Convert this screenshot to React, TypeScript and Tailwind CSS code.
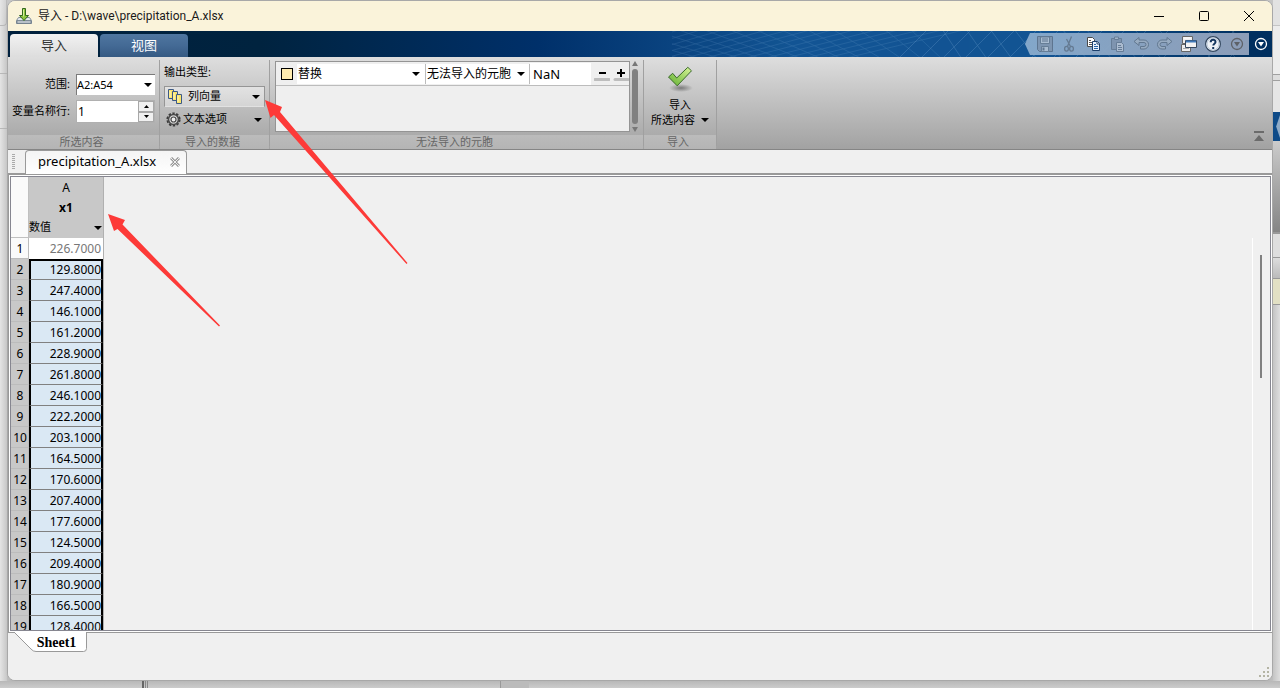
import type { ReactNode } from 'react';

const VALUES = [
  '226.7000', '129.8000', '247.4000', '146.1000', '161.2000', '228.9000', '261.8000',
  '246.1000', '222.2000', '203.1000', '164.5000', '170.6000', '207.4000', '177.6000',
  '124.5000', '209.4000', '180.9000', '166.5000', '128.4000',
];

function Caret({ className = '' }: { className?: string }) {
  return (
    <svg className={`pointer-events-none shrink-0 ${className}`} width="8" height="4" viewBox="0 0 8 4">
      <path d="M0 0h8L4 4z" fill="currentColor" />
    </svg>
  );
}

function Separator() {
  return <div className="w-px my-[3px] bg-[#a0a0a0]" />;
}

// Ribbon section with its caption strip
function Group({ label, className = '', children }: { label: string; className?: string; children: ReactNode }) {
  return (
    <section className={`flex flex-col shrink-0 ${className}`}>
      <div className="flex-1 min-h-0">{children}</div>
      <div className="h-[14px] pr-1 leading-[13px] text-center text-[#666] bg-white/20">{label}</div>
    </section>
  );
}

function ImportIcon() {
  return (
    <svg width="16" height="16" viewBox="0 0 16 16">
      <path d="M2.5 9.5L.5 12.5v3h15v-3l-2-3z" fill="#e4e8ec" stroke="#7e8c99" />
      <path d="M1 12.5h14v3H1z" fill="#b9c1c9" stroke="#6c7a86" strokeWidth=".8" />
      <path d="M6.500.5h3v7h3L8 12.5 3.500 7.500h3z" fill="#8cc63f" stroke="#33691e" />
      <path d="M7.500 1.500v7" stroke="#d4f09c" />
    </svg>
  );
}

function ColumnsIcon() {
  return (
    <svg width="15" height="15" viewBox="0 0 15 15" fill="#fbe46b" stroke="#3c5a86">
      <path d="M.5.500h5v9h-5z" />
      <path d="M4.500 2.500h5v9h-5z" />
      <path d="M8.500 5.500h5v9h-5z" />
      <path d="M2 2v6M6 4v6M10 7v6" stroke="#fff7c0" />
    </svg>
  );
}

function GearIcon() {
  return (
    <svg width="15" height="15" viewBox="0 0 15 15" fill="none">
      <circle cx="7.5" cy="7.5" r="6.200" stroke="#3d3d3d" strokeWidth="1.800" strokeDasharray="2.400 1.500" />
      <circle cx="7.5" cy="7.5" r="5" stroke="#4a4a4a" strokeWidth="1.600" fill="#d8d8d8" />
      <circle cx="7.5" cy="7.5" r="2.500" stroke="#4a4a4a" strokeWidth="1.200" fill="#eee" />
    </svg>
  );
}

function CheckIcon() {
  return (
    <svg width="26" height="26" viewBox="0 0 26 26">
      <defs>
        <linearGradient id="check" x1="0" y1="1" x2="1" y2="0">
          <stop offset="0" stopColor="#5fae2e" />
          <stop offset="1" stopColor="#d9f59a" />
        </linearGradient>
        <radialGradient id="shade">
          <stop offset="0" stopColor="#666" stopOpacity=".8" />
          <stop offset="1" stopColor="#666" stopOpacity="0" />
        </radialGradient>
      </defs>
      <ellipse cx="14" cy="22" rx="12" ry="4" fill="url(#shade)" />
      <path d="M1.500 11l4.200-3.700 4 4.700L20.800 1.300l3.700 3.500L10.200 19.800z" fill="url(#check)" stroke="#3a6a2a" strokeLinejoin="round" />
    </svg>
  );
}

const QUICK_ACTIONS: { name: string; icon: ReactNode }[] = [
  {
    name: '保存',
    icon: (
      <g opacity=".75">
        <path d="M.5.500h15v15h-13l-2-2z" fill="#7b8fa8" stroke="#51647c" />
        <path d="M3.500 1h9v6.500h-9z" fill="#b7c5d4" stroke="#5d7086" />
        <path d="M5 3h6M5 5h6" stroke="#51647c" />
        <path d="M4.500 10.500h7v5h-7z" fill="#b7c5d4" stroke="#5d7086" />
        <path d="M5.500 11.500h2v3h-2z" fill="#51647c" />
      </g>
    ),
  },
  {
    name: '剪切',
    icon: (
      <g fill="none" stroke="#647a92">
        <path d="M10.500.500L6.500 10.500M5.500 3l4 7.500" strokeWidth="1.300" />
        <ellipse cx="5.500" cy="12.800" rx="1.900" ry="2.400" strokeWidth="1.300" />
        <ellipse cx="10.500" cy="12.800" rx="1.900" ry="2.400" strokeWidth="1.300" />
      </g>
    ),
  },
  {
    name: '复制',
    icon: (
      <g>
        <path d="M2.500 1.500h5l2 2v7h-7z" fill="#fff" stroke="#4a4a4a" />
        <path d="M4 4.500h2M4 6.500h4M4 8.500h4" stroke="#555" />
        <path d="M7.500 5.500h5l2 2v7h-7z" fill="#e8f1fb" stroke="#1c3f6b" />
        <path d="M12 5.500v2.500h2.500" stroke="#1c3f6b" fill="#fff" />
        <path d="M9 8.500h2M9 10.500h4M9 12.500h4" stroke="#2763a5" />
      </g>
    ),
  },
  {
    name: '粘贴',
    icon: (
      <g opacity=".75" stroke="#5b7088">
        <path d="M2.500 2.500h10v11h-10z" fill="#7b8fa8" />
        <path d="M5.500 1h4v2.500h-4z" fill="#a9b9ca" />
        <path d="M7.500 6.500h5l2 2v7h-7z" fill="#b7c5d4" />
        <path d="M9 9.500h3M9 11.500h4M9 13.500h4" />
      </g>
    ),
  },
  {
    name: '撤消',
    icon: (
      <path d="M1 5.500L6 1.500v2.500h5a4.500 4.500 0 010 9H7.500v-2.500H11a2 2 0 000-4H6V9.500z" fill="#97abc1" stroke="#61778f" />
    ),
  },
  {
    name: '重做',
    icon: (
      <path d="M15 5.500L10 1.500v2.500H5a4.500 4.500 0 000 9h3.500v-2.500H5a2 2 0 010-4h5V9.500z" fill="#97abc1" stroke="#61778f" />
    ),
  },
  {
    name: '切换窗口',
    icon: (
      <g>
        <path d="M1.500.500h10v7h-10z" fill="#eee" stroke="#666" />
        <path d="M3 2h7" stroke="#fff" />
        <path d="M.500 8.500h9v7h-9z" fill="#eee" stroke="#666" />
        <path d="M2 12.500h6" stroke="#aaa" />
        <path d="M4.500 4.500h11v7h-11z" fill="#f3f3f3" stroke="#35485f" />
        <path d="M5 5.500h10" stroke="#3f78b8" strokeWidth="2" />
      </g>
    ),
  },
  {
    name: '帮助',
    icon: (
      <g>
        <circle cx="8" cy="8" r="7.400" fill="#eef2f7" stroke="#33475f" strokeWidth="1.200" />
        <circle cx="8" cy="8" r="6" fill="none" stroke="#b9c9da" />
        <path d="M5.700 6.200c0-3.200 4.800-3.200 4.800-.2 0 1.700-2.200 1.700-2.200 3.500M8.200 11v2" fill="none" stroke="#14365f" strokeWidth="2" />
      </g>
    ),
  },
  {
    name: '快速访问',
    icon: (
      <g>
        <circle cx="8" cy="8" r="5.500" fill="none" stroke="#5d6168" strokeWidth="1.300" />
        <path d="M5 6h6l-3 4.500z" fill="#5d6168" />
      </g>
    ),
  },
];

function BannerMesh() {
  return (
    <svg className="absolute right-0 top-0 h-full w-[600px]" viewBox="0 0 600 26" fill="none" stroke="#9cc4e8" strokeWidth=".7">
      {/* flat part of the net */}
      <g opacity=".18">
        {Array.from({ length: 14 }).map((_, i) => (
          <path key={i} d={`M${i * 26 - 100} -2L${i * 20 + 10} 28`} />
        ))}
        {Array.from({ length: 14 }).map((_, i) => (
          <path key={i} d={`M${i * 22 + 10} -2L${i * 20 - 90} 28`} />
        ))}
      </g>
      {/* steep part */}
      <g opacity=".28">
        {Array.from({ length: 14 }).map((_, i) => (
          <path key={i} d={`M${270 + i * 24} -2l${20 + i} 30`} />
        ))}
        {Array.from({ length: 16 }).map((_, i) => (
          <path key={i} d={`M${256 + i * 22} -2l-30 30`} />
        ))}
      </g>
    </svg>
  );
}

function TitleBar() {
  return (
    <header className="flex h-[30px] shrink-0 items-center bg-[#faf3da] pl-2">
      <ImportIcon />
      <h1 className="ml-[6px] flex-1 font-['Roboto','Noto_Sans_CJK_SC',sans-serif] text-xs text-[#1a1a1a]">导入 - D:\wave\precipitation_A.xlsx</h1>
      <button aria-label="最小化" className="flex h-full w-[45px] items-center justify-center">
        <svg width="10" height="10"><path d="M0 5.500h10" stroke="#000" /></svg>
      </button>
      <button aria-label="最大化" className="flex h-full w-[45px] items-center justify-center">
        <svg width="10" height="10"><rect x=".5" y=".5" width="9" height="9" rx="1" fill="none" stroke="#000" /></svg>
      </button>
      <button aria-label="关闭" className="flex h-full w-[46px] items-center justify-center">
        <svg width="10" height="10"><path d="M0 0l10 10M10 0L0 10" stroke="#000" /></svg>
      </button>
    </header>
  );
}

function TabBar() {
  return (
    <nav className="relative flex h-[26px] shrink-0 items-end gap-[2px] bg-[linear-gradient(90deg,#00203d_0%,#00233f_20%,#00306a_42%,#135594_62%,#135594_82%,#00305f_98%)] pl-[2px]">
      <BannerMesh />
      <button className="relative h-[23px] w-[88px] rounded-t-[4px] bg-linear-to-b from-[#f2f2f2] to-[#dddddd] text-[13px] text-[#333]">导入</button>
      <button className="relative h-[23px] w-[88px] rounded-t-[4px] bg-linear-to-b from-[#4f76a0] via-[#446a95] to-[#355a83] text-[13px] text-white">视图</button>
      <div className="relative ml-auto mb-[2px] flex h-[22px] bg-linear-to-r from-[#8fb0d0]/90 to-[#8c9db8] pl-2 [clip-path:polygon(5px_0,100%_0,100%_100%,5px_100%,0_50%)]">
        {QUICK_ACTIONS.map((action) => (
          <button key={action.name} aria-label={action.name} className="flex w-6 items-center justify-center">
            <svg width="16" height="16" viewBox="0 0 16 16">{action.icon}</svg>
          </button>
        ))}
      </div>
      <button aria-label="更多" className="relative -ml-[2px] flex h-full w-[23px] items-center justify-center bg-[#002f5f]">
        <svg width="16" height="16" viewBox="0 0 16 16">
          <circle cx="8" cy="8" r="5.500" fill="none" stroke="#fff" strokeWidth="1.300" />
          <path d="M5 6h6l-3 4.500z" fill="#fff" />
        </svg>
      </button>
    </nav>
  );
}

function Ribbon() {
  return (
    <div className="flex h-[93px] shrink-0 border-b border-[#858585] bg-linear-to-b from-[#dedede] to-[#a2a2a2] text-[11px]">
      <Group label="所选内容" className="w-[151px]">
        <div className="grid grid-cols-[62px_79px] items-center gap-x-[6px] gap-y-[5px] pt-[17px] text-right">
          <label htmlFor="range">范围:</label>
          <div className="relative flex h-[21px] items-center border-l border-t border-[#7a7a7a] bg-white">
            <select id="range" className="h-full w-full appearance-none outline-none">
              <option>A2:A54</option>
            </select>
            <Caret className="absolute right-[3px]" />
          </div>
          <label htmlFor="name-row" className="whitespace-nowrap">变量名称行:</label>
          <div className="flex h-[23px] border border-[#b0b0b0] bg-white">
            <input id="name-row" defaultValue="1" className="min-w-0 flex-1 px-px text-xs outline-none" />
            <div className="flex w-4 flex-col">
              <button aria-label="增加" className="flex flex-1 items-center justify-center border border-[#a8a8a8] bg-[#f0f0f0]">
                <svg width="5" height="3"><path d="M0 3h5L2.500 0z" /></svg>
              </button>
              <button aria-label="减少" className="flex flex-1 items-center justify-center border border-[#a8a8a8] bg-[#f0f0f0]">
                <svg width="5" height="3"><path d="M0 0h5L2.500 3z" /></svg>
              </button>
            </div>
          </div>
        </div>
      </Group>
      <Separator />
      <Group label="导入的数据" className="w-[109px]">
        <div className="flex flex-col pl-1 pt-[5px]">
          <label htmlFor="output-type" className="h-6 leading-5">输出类型:</label>
          <div className="relative flex h-[21px] w-[101px] items-center border border-b-transparent border-[#959595] bg-linear-to-b from-[#e2e2e2] to-[#d4d4d4] pl-[3px]">
            <ColumnsIcon />
            <select id="output-type" className="h-full flex-1 appearance-none pl-[5px] outline-none">
              <option>列向量</option>
            </select>
            <Caret className="absolute right-1" />
          </div>
          <button className="mt-[2px] flex h-[21px] w-[101px] items-center pl-[2px] pr-[3px]">
            <GearIcon />
            <span className="ml-[2px]">文本选项</span>
            <Caret className="ml-auto" />
          </button>
        </div>
      </Group>
      <Separator />
      <Group label="无法导入的元胞" className="w-[373px]">
        <div className="flex h-full pb-[3px] pl-[5px] pt-1 text-xs">
          <div className="w-[355px] border border-[#949494] bg-[#efefef]">
            <div className="flex h-6 items-center border-b border-[#bcbcbc]">
              <div className="ml-[5px] h-3 w-3 shrink-0 border border-black bg-[#ffecb0]" />
              <div className="relative ml-1 flex h-5 w-[128px] items-center bg-white">
                <select aria-label="规则" className="h-full w-full appearance-none pl-px outline-none">
                  <option>替换</option>
                </select>
                <Caret className="absolute right-[5px]" />
              </div>
              <div className="relative flex h-5 w-[105px] items-center border-x border-[#bcbcbc] bg-white">
                <select aria-label="条件" className="h-full w-full appearance-none pl-px outline-none">
                  <option>无法导入的元胞</option>
                </select>
                <Caret className="absolute right-1" />
              </div>
              <input aria-label="替换值" defaultValue="NaN" className="h-[22px] w-[61px] bg-white px-[3px] text-[13px] outline-none" />
              <button aria-label="删除规则" className="ml-1 flex h-5 w-[14px] flex-col items-center">
                <svg width="16" height="18" viewBox="0 0 16 18">
                  <path d="M5 9h7" stroke="#000" strokeWidth="2" />
                  <path d="M1 15.500h14" stroke="#bdbdbd" strokeWidth="3" strokeLinecap="round" />
                </svg>
              </button>
              <button aria-label="添加规则" className="ml-1 flex h-5 w-4 flex-col items-center">
                <svg width="16" height="18" viewBox="0 0 16 18">
                  <path d="M4 9h8M8 5v8" stroke="#000" strokeWidth="2" />
                  <path d="M2 15.500h13" stroke="#bdbdbd" strokeWidth="3" strokeLinecap="round" />
                </svg>
              </button>
            </div>
          </div>
          <div className="flex w-[10px] flex-col items-center gap-[3px] text-[#777]">
            <svg className="shrink-0" width="6" height="5"><path d="M0 5h6L3 0z" fill="currentColor" /></svg>
            <div className="w-[6px] flex-1 rounded-full bg-[#808080]" />
            <svg className="shrink-0" width="6" height="5"><path d="M0 0h6L3 5z" fill="currentColor" /></svg>
          </div>
        </div>
      </Group>
      <Separator />
      <Group label="导入" className="w-[72px]">
        <button className="flex w-full flex-col items-center pt-[9px] leading-[15px]">
          <CheckIcon />
          <span className="mt-[5px]">导入</span>
          <span className="flex items-center gap-[6px] whitespace-nowrap">
            所选内容
            <Caret />
          </span>
        </button>
      </Group>
      <Separator />
      <button aria-label="最小化工具条" className="ml-auto self-end p-2">
        <svg width="10" height="10" viewBox="0 0 10 10" fill="#6b6b6b">
          <path d="M0 0h10v2H0zM5 4l5 6H0z" />
        </svg>
      </button>
    </div>
  );
}

function DocumentTabs() {
  return (
    <div className="flex h-6 shrink-0 border-b border-[#999] bg-[#f0f0f0]">
      <div className="ml-1 mt-1 h-[15px] w-[3px] bg-[repeating-linear-gradient(#aaa_0_1px,transparent_1px_2px)]" />
      <div className="z-10 -mb-px ml-[10px] flex items-center rounded-t-[4px] border border-b-0 border-[#999] bg-linear-to-b from-[#f4f4f4] to-white pb-px pl-3 pr-[6px] text-[13px]">
        <span>precipitation_A.xlsx</span>
        <button aria-label="关闭标签" className="ml-[14px]">
          <svg width="10" height="10" viewBox="0 0 10 10">
            <path d="M1 1l8 8M9 1L1 9" stroke="#999" strokeWidth="3" />
            <path d="M1 1l8 8M9 1L1 9" stroke="#eee" />
          </svg>
        </button>
      </div>
    </div>
  );
}

function DataGrid() {
  return (
    <div className="flex min-h-0 flex-1 border border-r-0 border-[#999] bg-white p-px">
      <div className="flex flex-1 overflow-hidden border border-[#868690] bg-[#f0f0f0]">
        <div className="w-[93px] border-r border-[#b0b0b0]">
          <table className="w-full table-fixed border-separate border-spacing-0">
            <thead>
              <tr>
                <th className="h-[61px] w-[18px] border-b border-r border-[#c0c0c0] bg-[#fafafa]" />
                <th className="bg-[#c8c8c8] p-0 align-top font-normal">
                  <div className="h-5 leading-[22px]">A</div>
                  <div className="h-5 font-bold leading-[22px]">x1</div>
                  <div className="relative flex h-[21px] items-center">
                    <select aria-label="变量类型" className="h-full w-full appearance-none text-[11px] outline-none">
                      <option>数值</option>
                    </select>
                    <Caret className="absolute right-px" />
                  </div>
                </th>
              </tr>
            </thead>
            <tbody>
              {VALUES.map((value, i) => (
                <tr key={i} className="h-[21px] leading-5">
                  <th
                    scope="row"
                    className={`border-b border-r border-[#bcbcbc] p-0 pl-px pt-px text-center font-normal leading-[19px] ${i === 0 ? 'bg-[#fafafa]' : 'bg-[#c8c8c8]'}`}
                  >
                    {i + 1}
                  </th>
                  {i === 0 ? (
                    <td className="bg-white p-0 pr-[2px] pt-px text-right text-[#777]">{value}</td>
                  ) : (
                    <td
                      className={`border-b border-l-2 border-r-2 border-b-[#808080] border-x-black bg-[#dae8f4] p-0 text-right ${i === 1 ? 'border-t-2 border-t-black leading-[18px]' : 'pt-px leading-[19px]'}`}
                    >
                      {value}
                    </td>
                  )}
                </tr>
              ))}
            </tbody>
          </table>
        </div>
        <div className="ml-auto mt-[61px] w-[18px] border-l border-white pl-[7px] pt-[17px]">
          <div className="h-[123px] w-[2px] bg-[#808080]" />
        </div>
      </div>
    </div>
  );
}

function SheetBar() {
  return (
    <footer className="relative flex h-[47px] shrink-0 items-start bg-[#f0f0f0]">
      <button className="relative -mt-px ml-[6px] h-5 w-[73px] pl-3 pt-px font-['Liberation_Serif',serif] text-[14px] font-bold leading-[19px]">
        <svg className="absolute left-0 top-0" width="73" height="20" viewBox="0 0 73 20">
          <path d="M0 0l17 17q2 2.500 5 2.500h47.500q3 0 3-3V0" fill="#fff" stroke="#999" />
        </svg>
        <span className="relative">Sheet1</span>
      </button>
      <svg className="absolute bottom-px right-px" width="12" height="12" viewBox="0 0 12 12" fill="#b4b4a4">
        <path d="M8 0h2v2H8zM4 4h2v2H4zM8 4h2v2H8zM0 8h2v2H0zM4 8h2v2H4zM8 8h2v2H8z" />
      </svg>
    </footer>
  );
}

// Edges of the windows lying behind the dialog
function LeftEdge() {
  return (
    <div className="flex w-[7px] shrink-0 flex-col bg-linear-to-r from-[#e6e6e6] to-[#cfcfcf]">
      <div className="h-[26px] rounded-br border-b border-r border-[#bbb]" />
      <div className="h-12 border-b border-[#bbb]" />
      <div className="h-[55px] border-b border-[#bbb]" />
    </div>
  );
}

function RightEdge() {
  return (
    <div className="flex w-[7px] shrink-0 flex-col bg-linear-to-r from-[#c4c4c4] to-[#dedede]">
      <div className="h-[26px] border-b border-[#c4c4c4] bg-[#e2e2e2]" />
      <div className="h-12 bg-[#ececec]" />
      <div className="h-[7px] border-y border-[#a0a0a0] bg-[#ddd]" />
      <div className="h-[31px] bg-[#e6e6e6]" />
      <div className="h-[29px] bg-[#0f4b88]">
        <div className="h-full bg-[#8fabc7] [clip-path:polygon(100%_10%,45%_50%,100%_90%)]" />
      </div>
      <div className="h-[93px] border-b-2 border-[#999] bg-linear-to-b from-[#ccc] to-[#858585]" />
      <div className="h-[23px] bg-[#dedede]" />
      <div className="h-[22px] border-y border-[#999] bg-linear-to-b from-[#ddd] to-[#bbb]" />
      <div className="h-[26px] border-b border-[#999] bg-[#e2e0c4]" />
    </div>
  );
}

function Annotations() {
  return (
    <svg className="pointer-events-none absolute left-0 top-0 z-20" width="420" height="340" viewBox="0 0 420 340" fill="#fd3a38">
      <path d="M265 100L282 107L280 112L407.500 263L406.500 264L274 115L270.500 118z" />
      <path d="M108 214L125 220L122.500 224.500L220 325.500L219 326.500L117.500 229L114 231z" />
    </svg>
  );
}

export default function App() {
  return (
    <div className="relative flex h-screen flex-col overflow-hidden bg-[#c6c6c6] font-['Noto_Sans','Noto_Sans_CJK_SC',sans-serif] text-xs text-black">
      <div className="flex min-h-0 flex-1">
        <LeftEdge />
        <main className="flex min-w-0 flex-1 flex-col overflow-hidden rounded-lg border border-[#a8a8a8] bg-[#f0f0f0] shadow-lg">
          <TitleBar />
          <TabBar />
          <Ribbon />
          <DocumentTabs />
          <DataGrid />
          <SheetBar />
        </main>
        <RightEdge />
      </div>
      <div className="flex h-[7px] shrink-0 bg-linear-to-b from-[#b8b8b8] to-[#cccccc]">
        <div className="ml-[142px] w-[2px] bg-[#666]" />
        <div className="ml-px w-[3px] border-x border-[#888]" />
        <div className="ml-[352px] w-[29px] border-l border-[#999] bg-[#bbb]" />
      </div>
      <Annotations />
    </div>
  );
}
